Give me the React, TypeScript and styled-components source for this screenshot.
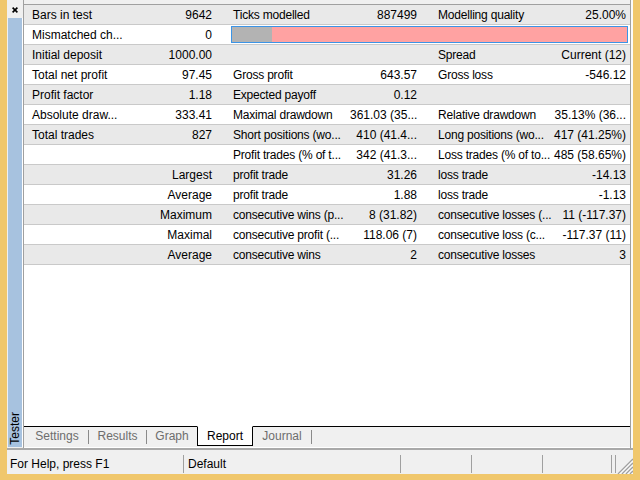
import React from "react";
import styled, { createGlobalStyle } from "styled-components";

const Global = createGlobalStyle`
  html, body { margin: 0; padding: 0; width: 640px; height: 480px; overflow: hidden; }
  body { font-family: "Liberation Sans", Arial, sans-serif; font-size: 12px; color: #000; }
`;

const Window = styled.div`
  width: 640px;
  height: 480px;
  box-sizing: border-box;
  background: #f0c76c;
  padding: 0 7px 6px 7px;
  display: flex;
  flex-direction: column;
`;

const Inner = styled.div`
  flex: 1;
  background: #f0f0f0;
  display: flex;
  flex-direction: column;
  min-height: 0;
`;

const Main = styled.div`
  display: flex;
  height: 448px;
  border-right: 2px solid #fbfbfb;
`;

const SideStrip = styled.div`
  width: 16px;
  display: flex;
  flex-direction: column;
`;

const CloseArea = styled.div`
  height: 18px;
  box-sizing: border-box;
  padding: 7px 0 0 5px;
  line-height: 0;
`;

const BlueBar = styled.div`
  flex: 1;
  margin: 0 0 1px 1px;
  width: 14px;
  border-right: 1px solid #ffffff;
  background: #a7c2df;
  display: flex;
  flex-direction: column;
  justify-content: flex-end;
  align-items: center;
`;

const VerticalLabel = styled.span`
  writing-mode: vertical-rl;
  transform: rotate(180deg);
  font-size: 12px;
  line-height: 14px;
  padding-top: 2px;
  color: #000;
`;

const Panel = styled.div`
  flex: 1;
  display: flex;
  flex-direction: column;
  border-left: 1px solid #a0a0a0;
  border-right: 1px solid #a0a0a0;
  padding-top: 4px;
  min-width: 0;
`;

const List = styled.div`
  flex: 1;
  background: #ffffff;
  border-top: 1px solid #a0a0a0;
  overflow: hidden;
`;

const Row = styled.div<{ $alt: boolean }>`
  display: grid;
  grid-template-columns: 104px 98px 124px 80px 123px 77px;
  height: 20px;
  box-sizing: border-box;
  border-bottom: 1px solid #c9c9c9;
  background: ${(p) => (p.$alt ? "#e9e9e9" : "#ffffff")};
`;

const Cell = styled.div<{ $right: boolean; $pad: number; $tight: boolean }>`
  white-space: nowrap;
  overflow: hidden;
  padding-top: 1px;
  line-height: 18px;
  letter-spacing: ${(p) => (p.$tight ? "-0.2px" : "0")};
  text-align: ${(p) => (p.$right ? "right" : "left")};
  padding-left: ${(p) => (p.$right ? 0 : p.$pad)}px;
  padding-right: ${(p) => (p.$right ? p.$pad : 0)}px;
`;

const QualityBar = styled.div`
  grid-column: 3 / 7;
  margin: 1px 2px 0 5px;
  height: 17px;
  box-sizing: border-box;
  border: 1px solid #3b94e6;
  background: #ffa2a2;
  display: flex;
`;

const QualityFill = styled.div<{ $w: number }>`
  width: ${(p) => p.$w}px;
  background: #b3b3b3;
`;

const TabBar = styled.div`
  height: 22px;
  box-sizing: border-box;
  border-top: 1px solid #000;
  border-bottom: 1px solid #ffffff;
  background: #f0f0f0;
  display: flex;
  align-items: flex-start;
  padding-left: 2px;
`;

const Tab = styled.div<{ $w: number; $active?: boolean }>`
  width: ${(p) => p.$w}px;
  box-sizing: border-box;
  text-align: center;
  color: ${(p) => (p.$active ? "#000" : "#6d6d6d")};
  ${(p) =>
    p.$active
      ? `
    height: 20px;
    margin-top: -1px;
    background: #ffffff;
    border: 1px solid #000;
    border-top-color: #ffffff;
    line-height: 18px;
  `
      : `
    height: 20px;
    line-height: 19px;
  `}
`;

const TabSep = styled.div`
  width: 1px;
  height: 14px;
  margin-top: 3px;
  background: #8a8a8a;
`;

const StatusBar = styled.div`
  height: 26px;
  box-sizing: border-box;
  border-top: 2px solid #a9a9a9;
  display: flex;
  padding: 5px 0 1px 0;
`;

const StatusPane = styled.div<{ $w: number; $pad?: number }>`
  width: ${(p) => p.$w}px;
  box-sizing: border-box;
  border-right: 1px solid #a0a0a0;
  padding-left: ${(p) => p.$pad ?? 0}px;
  line-height: 18px;
  white-space: nowrap;
  overflow: hidden;
`;

const GripArea = styled.div`
  flex: 1;
  display: flex;
  justify-content: flex-end;
  align-items: flex-end;
  margin-bottom: -1px;
`;

type Data = string[];

const rows: Data[] = [
  ["Bars in test", "9642", "Ticks modelled", "887499", "Modelling quality", "25.00%"],
  ["Mismatched ch...", "0"],
  ["Initial deposit", "1000.00", "", "", "Spread", "Current (12)"],
  ["Total net profit", "97.45", "Gross profit", "643.57", "Gross loss", "-546.12"],
  ["Profit factor", "1.18", "Expected payoff", "0.12", "", ""],
  ["Absolute draw...", "333.41", "Maximal drawdown", "361.03 (35...", "Relative drawdown", "35.13% (36..."],
  ["Total trades", "827", "Short positions (wo...", "410 (41.4...", "Long positions (wo...", "417 (41.25%)"],
  ["", "", "Profit trades (% of t...", "342 (41.3...", "Loss trades (% of to...", "485 (58.65%)"],
  ["", "Largest", "profit trade", "31.26", "loss trade", "-14.13"],
  ["", "Average", "profit trade", "1.88", "loss trade", "-1.13"],
  ["", "Maximum", "consecutive wins (p...", "8 (31.82)", "consecutive losses (...", "11 (-117.37)"],
  ["", "Maximal", "consecutive profit (...", "118.06 (7)", "consecutive loss (c...", "-117.37 (11)"],
  ["", "Average", "consecutive wins", "2", "consecutive losses", "3"],
];

const pads = [8, 14, 7, 13, 8, 4];

const CloseIcon = () => (
  <svg width="6" height="6" viewBox="0 0 6 6">
    <path d="M0.6 0.6L5.4 5.4M5.4 0.6L0.6 5.4" stroke="#000" strokeWidth="1.6" />
  </svg>
);

const Grip = () => (
  <svg width="16" height="16" viewBox="0 0 16 16">
    {[3, 7, 11, 15].map((k) => (
      <g key={k}>
        <line x1={16} y1={16 - k} x2={16 - k} y2={16} stroke="#a0a0a0" strokeWidth="1.4" />
        <line x1={16} y1={16 - k + 1.6} x2={16 - k + 1.6} y2={16} stroke="#ffffff" strokeWidth="1" />
      </g>
    ))}
  </svg>
);

export default function App() {
  return (
    <>
      <Global />
      <Window>
        <Inner>
          <Main>
            <SideStrip>
              <CloseArea>
                <CloseIcon />
              </CloseArea>
              <BlueBar>
                <VerticalLabel>Tester</VerticalLabel>
              </BlueBar>
            </SideStrip>
            <Panel>
              <List>
                {rows.map((r, i) => (
                  <Row key={i} $alt={i % 2 === 0}>
                    {i === 1 ? (
                      <>
                        <Cell $right={false} $pad={pads[0]} $tight={false}>{r[0]}</Cell>
                        <Cell $right $pad={pads[1]} $tight={false}>{r[1]}</Cell>
                        <QualityBar>
                          <QualityFill $w={40} />
                        </QualityBar>
                      </>
                    ) : (
                      r.map((t, j) => (
                        <Cell key={j} $right={j % 2 === 1} $pad={pads[j]} $tight={j === 2 || j === 4}>
                          {t}
                        </Cell>
                      ))
                    )}
                  </Row>
                ))}
              </List>
              <TabBar>
                <Tab $w={62}>Settings</Tab>
                <TabSep />
                <Tab $w={57}>Results</Tab>
                <TabSep />
                <Tab $w={50}>Graph</Tab>
                <Tab $w={56} $active>
                  Report
                </Tab>
                <Tab $w={58}>Journal</Tab>
                <TabSep />
              </TabBar>
            </Panel>
          </Main>
          <StatusBar>
            <StatusPane $w={177} $pad={3}>For Help, press F1</StatusPane>
            <StatusPane $w={217} $pad={4}>Default</StatusPane>
            <StatusPane $w={71} />
            <StatusPane $w={71} />
            <StatusPane $w={69} />
            <StatusPane $w={4} />
            <GripArea>
              <Grip />
            </GripArea>
          </StatusBar>
        </Inner>
      </Window>
    </>
  );
}
